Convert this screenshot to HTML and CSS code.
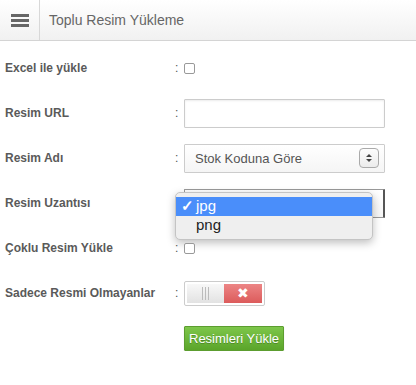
FILE: index.html
```html
<!DOCTYPE html>
<html lang="tr">
<head>
    <meta charset="UTF-8">
    <title>Toplu Resim Yükleme</title>
    <link rel="stylesheet" href="styles.css">
</head>
<body>
    <div class="header">
        <div class="menu-cell">
            <span class="bars"><i></i><i></i><i></i></span>
        </div>
        <h2>Toplu Resim Yükleme</h2>
    </div>

    <form class="upload-form">
        <div class="row">
            <label>Excel ile yükle</label>
            <span class="colon">:</span>
            <input type="checkbox" class="check">
        </div>
        <div class="row">
            <label>Resim URL</label>
            <span class="colon">:</span>
            <input type="text" class="field">
        </div>
        <div class="row">
            <label>Resim Adı</label>
            <span class="colon">:</span>
            <div class="select">
                <span>Stok Koduna Göre</span>
                <span class="spinner"><b class="up"></b><b class="down"></b></span>
            </div>
        </div>
        <div class="row">
            <label>Resim Uzantısı</label>
            <span class="colon">:</span>
            <div class="select focused"></div>
            <!-- acik secim menusu -->
            <ul class="popup">
                <li class="active"><span class="tick">✓</span>jpg</li>
                <li><span class="tick"></span>png</li>
            </ul>
        </div>
        <div class="row">
            <label>Çoklu Resim Yükle</label>
            <span class="colon">:</span>
            <input type="checkbox" class="check">
        </div>
        <div class="row">
            <label>Sadece Resmi Olmayanlar</label>
            <span class="colon">:</span>
            <div class="toggle">
                <span class="handle"><i></i><i></i><i></i></span>
                <span class="off">✖</span>
            </div>
        </div>
        <div class="actions">
            <button type="button" class="btn-green">Resimleri Yükle</button>
        </div>
    </form>
</body>
</html>
```

FILE: styles.css
```css
body {
    margin: 0;
    font-family: "Liberation Sans", Arial, sans-serif;
    background: #fff;
    color: #555;
}
.header {
    display: flex;
    align-items: stretch;
    height: 40px;
    background: linear-gradient(#ffffff, #f1f1f1);
    border-bottom: 1px solid #d4d4d4;
}
.menu-cell {
    width: 39px;
    border-right: 1px solid #d8d8d8;
    display: flex;
    align-items: center;
    justify-content: center;
}
.bars {
    display: flex;
    flex-direction: column;
    gap: 2px;
    width: 18px;
    margin-top: 1px;
}
.bars i {
    display: block;
    height: 3px;
    background: #666;
}
.header h2 {
    margin: 0;
    padding-left: 9px;
    font-size: 14px;
    font-weight: normal;
    color: #666;
    line-height: 40px;
}
.upload-form {
    padding: 12px 0 0 5px;
}
.row {
    position: relative;
    display: flex;
    align-items: center;
    height: 30px;
    margin-bottom: 15px;
}
.row label {
    width: 170px;
    font-size: 12px;
    font-weight: bold;
    color: #5a5a5a;
}
.colon {
    width: 9px;
    font-size: 12px;
    color: #555;
}
.check {
    appearance: none;
    margin: 0;
    width: 11px;
    height: 11px;
    border: 1px solid #999;
    border-radius: 2px;
    background: #fff;
    box-sizing: border-box;
}
.field {
    width: 201px;
    height: 29px;
    box-sizing: border-box;
    border: 1px solid #ccc;
    border-radius: 1px;
    box-shadow: inset 0 1px 2px rgba(0, 0, 0, 0.08);
    background: #fff;
}
.select {
    width: 201px;
    height: 29px;
    box-sizing: border-box;
    border: 1px solid #ccc;
    border-radius: 1px;
    background: linear-gradient(#ffffff, #f5f5f5);
    display: flex;
    align-items: center;
    justify-content: space-between;
    padding: 0 5px 0 10px;
    font-size: 13px;
    color: #555;
}
.select.focused {
    border-color: #999;
    border-right: 2px solid #555;
}
.spinner {
    width: 20px;
    height: 20px;
    box-sizing: border-box;
    border: 1px solid #aaa;
    border-radius: 4px;
    background: linear-gradient(#fdfdfd, #ececec);
    display: flex;
    flex-direction: column;
    align-items: center;
    justify-content: center;
    gap: 2px;
}
.spinner b {
    width: 0;
    height: 0;
    border-left: 3px solid transparent;
    border-right: 3px solid transparent;
}
.spinner .up {
    border-bottom: 3px solid #444;
}
.spinner .down {
    border-top: 3px solid #444;
}
.popup {
    position: absolute;
    left: 170px;
    top: 4px;
    width: 198px;
    margin: 0;
    padding: 4px 0;
    list-style: none;
    background: #efefef;
    border: 1px solid #c4c4c4;
    border-radius: 5px;
    box-shadow: 0 3px 8px rgba(0, 0, 0, 0.25);
    box-sizing: border-box;
    font-size: 15px;
    color: #222;
}
.popup li {
    height: 19px;
    line-height: 18px;
    display: flex;
}
.popup li.active {
    background: #4a8efa;
    color: #fff;
}
.tick {
    width: 20px;
    padding-left: 5px;
    box-sizing: border-box;
    font-size: 15px;
    font-weight: bold;
}
.toggle {
    display: flex;
    width: 81px;
    height: 25px;
    box-sizing: border-box;
    padding: 2px;
    border: 1px solid #ccc;
    border-radius: 2px;
    background: #fff;
}
.handle {
    width: 37px;
    background: linear-gradient(#f8f8f8, #e2e2e2);
    display: flex;
    justify-content: center;
    align-items: center;
    gap: 2px;
}
.handle i {
    width: 1px;
    height: 13px;
    background: #bbb;
}
.off {
    flex: 1;
    background: linear-gradient(#ec8585, #dc5b5b);
    color: #fff;
    font-size: 14px;
    display: flex;
    align-items: center;
    justify-content: center;
}
.actions {
    padding: 3px 0 0 179px;
}
.btn-green {
    height: 25px;
    padding: 0 4px;
    font-family: "Liberation Sans", Arial, sans-serif;
    font-size: 13px;
    color: #fff;
    text-shadow: 0 1px 0 rgba(0, 0, 0, 0.25);
    background: linear-gradient(#7dc64a, #5ba52a);
    border: 1px solid #5c9d2f;
    border-radius: 1px;
    box-shadow: 0 1px 1px rgba(0, 0, 0, 0.2);
    cursor: pointer;
}
```
